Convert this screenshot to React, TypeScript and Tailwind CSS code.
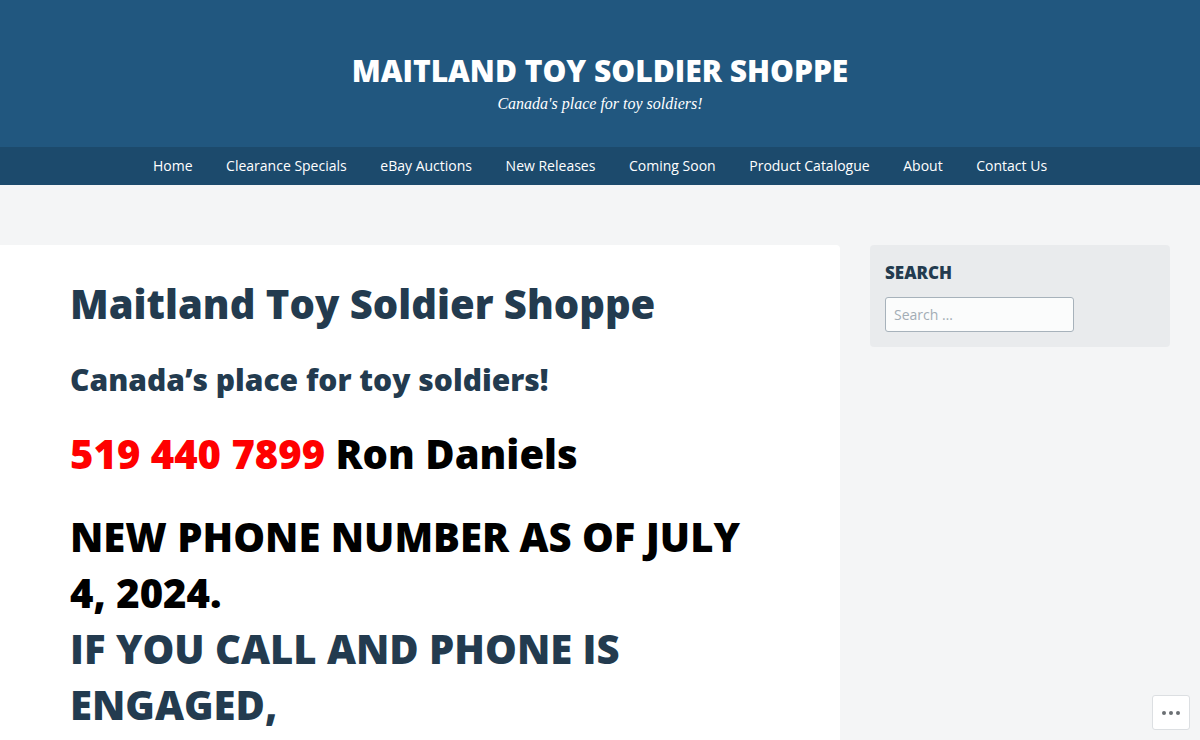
import React from "react";

const nav = ["Home", "Clearance Specials", "eBay Auctions", "New Releases", "Coming Soon", "Product Catalogue", "About", "Contact Us"];

export default function App() {
  return (
    <div className="w-[1200px] h-[740px] overflow-hidden bg-[#f4f5f6] relative" style={{ fontFamily: "'Open Sans', sans-serif" }}>
      <header className="bg-[#21577f] h-[147px] flex flex-col items-center pt-[52px]">
        <h1 className="text-white font-extrabold text-[30px] leading-[38px]">MAITLAND TOY SOLDIER SHOPPE</h1>
        <p className="text-white italic text-[16px] leading-[24px] mt-[2px]" style={{ fontFamily: "'Liberation Serif', serif" }}>Canada's place for toy soldiers!</p>
      </header>
      <nav className="bg-[#1c4a6c] h-[38px] flex justify-center items-center gap-[33.6px] text-white text-[14px] pb-[1px]">
        {nav.map((n) => (
          <span key={n}>{n}</span>
        ))}
      </nav>
      <div className="flex pt-[60px] gap-[30px]">
        <main className="w-[840px] h-[520px] bg-white rounded-tr-[4px] pl-[70px] pt-[31px] pr-[60px]">
          <h1 className="text-[#233b4f] font-extrabold text-[40px] leading-[56px]">Maitland Toy Soldier Shoppe</h1>
          <h2 className="text-[#233b4f] font-extrabold text-[30px] leading-[40px] mt-[28px]">Canada’s place for toy soldiers!</h2>
          <h2 className="font-extrabold text-[40px] leading-[56px] mt-[26px] text-black">
            <span className="text-[#ff0000]">519 440 7899</span> Ron Daniels
          </h2>
          <h2 className="font-extrabold text-[40px] leading-[56px] mt-[27px] text-black w-[690px]">NEW PHONE NUMBER AS OF JULY 4, 2024.</h2>
          <h2 className="font-extrabold text-[40px] leading-[56px] text-[#233b4f] w-[600px]">IF YOU CALL AND PHONE IS ENGAGED,</h2>
        </main>
        <aside className="w-[300px] h-[102px] bg-[#e9ebed] rounded-[4px] px-[15px] pt-[16px]">
          <h3 className="text-[#233b4f] font-extrabold text-[17px] leading-[24px]">SEARCH</h3>
          <input
            placeholder="Search …"
            className="mt-[12px] w-[189px] h-[35px] border border-[#a7b2bb] rounded-[3px] bg-[#fbfcfc] px-[8px] text-[14px] placeholder:text-[#a3adb5] outline-none"
          />
        </aside>
      </div>
      <div className="absolute left-[1152px] top-[695px] w-[38px] h-[35px] bg-white border border-[#dcdfe2] rounded-[3px] flex items-center justify-center gap-[3px]">
        <span className="w-[4px] h-[4px] rounded-full bg-[#6b6f73]" />
        <span className="w-[4px] h-[4px] rounded-full bg-[#6b6f73]" />
        <span className="w-[4px] h-[4px] rounded-full bg-[#6b6f73]" />
      </div>
    </div>
  );
}
